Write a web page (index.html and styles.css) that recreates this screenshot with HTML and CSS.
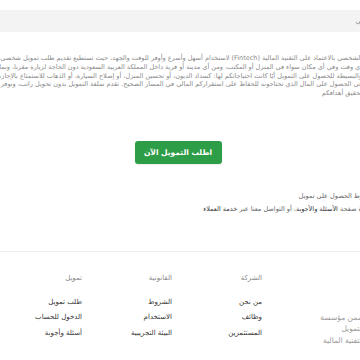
FILE: index.html
```html
<!DOCTYPE html>
<html lang="ar" dir="rtl">
<head>
    <meta charset="UTF-8" />
    <meta name="viewport" content="width=device-width, initial-scale=1.0" />
    <title>التمويل الشخصي</title>
    <link rel="stylesheet" href="styles.css">
</head>
<body>
    <div class="page">
        <div class="faq-bar">التمويل الشخصي</div>

        <p class="intro">
            الشخصي بالاعتماد على التقنية المالية (Fintech) لاستخدام أسهل وأسرع وأوفر للوقت والجهد، حيث تستطيع تقديم طلب تمويل شخصي والحصول عليه في<br>
            أي وقت وفي أي مكان سواء في المنزل أو المكتب، ومن أي مدينة أو قرية داخل المملكة العربية السعودية دون الحاجة لزيارة مقرنا، وبما يتوافق مع أحكام الشريعة<br>
            والبسيطة للحصول على التمويل أيًا كانت احتياجاتكم لها: كسداد الديون، أو تحسين المنزل، أو إصلاح السيارة، أو الذهاب للاستمتاع بالإجازة، أو غيرها<br>
            في الحصول على المال الذي تحتاجونه للحفاظ على استقراركم المالي في المسار الصحيح. تقدم سلفة التمويل بدون تحويل راتب، ونوفر لكم حلولاً تساعدكم<br>
            تحقيق أهدافكم
        </p>

        <div class="cta">
            <a href="#" class="cta-btn">اطلب التمويل الآن</a>
        </div>

        <div class="help">
            <p>شروط الحصول على تمويل</p>
            <p>زيارة صفحة <a href="#">الأسئلة والأجوبة</a>، أو التواصل معنا عبر <a href="#">خدمة العملاء</a></p>
        </div>
    </div>

    <footer class="footer">
        <div class="footer-grid">
            <div class="about">ضمن مؤسسة<br>التمويل<br>التقنية المالية</div>
            <div class="col">
                <h4>الشركة</h4>
                <a href="#">من نحن</a>
                <a href="#">وظائف</a>
                <a href="#">المستثمرين</a>
            </div>
            <div class="col">
                <h4>القانونية</h4>
                <a href="#">الشروط</a>
                <a href="#">الاستخدام</a>
                <a href="#">البيئة التجريبية</a>
            </div>
            <div class="col">
                <h4>تمويل</h4>
                <a href="#">طلب تمويل</a>
                <a href="#">الدخول للحساب</a>
                <a href="#">أسئلة وأجوبة</a>
            </div>
        </div>
    </footer>
</body>
</html>
```

FILE: styles.css
```css
html, body {
    margin: 0;
    overflow: hidden;
    background: #fff;
}
body {
    font-family: "DejaVu Sans", "Noto Sans", sans-serif;
    color: #333;
    width: 360px;
}
.page {
    width: 388px;
    margin-right: -12px;
}
.faq-bar {
    margin: 10px -36px 0 0;
    height: 22px;
    line-height: 22px;
    padding-right: 6px;
    background: #f3f3f3;
    color: #888;
    font-size: 6.5px;
}
.intro {
    margin: 22px 10px 0 0;
    font-size: 6.5px;
    line-height: 8.75px;
    color: #8a8a8a;
    white-space: nowrap;
}
.cta {
    margin-top: 42px;
    text-align: center;
}
.cta-btn {
    display: inline-block;
    width: 87px;
    height: 23px;
    line-height: 23px;
    background: #2e9d47;
    color: #fff;
    border-radius: 3px;
    font-size: 7.5px;
    font-weight: bold;
    text-decoration: none;
    box-shadow: 0 1px 2px rgba(0, 0, 0, 0.08);
}
.help {
    margin-top: 26px;
    font-size: 6.5px;
    line-height: 13px;
    color: #666;
}
.help p {
    margin: 0;
    white-space: nowrap;
}
.help a {
    color: #333;
    text-decoration: none;
}
.footer {
    margin-top: 35px;
    border-top: 1px solid #eee;
    padding: 21px 0 20px;
}
.footer-grid {
    display: grid;
    grid-template-columns: 110px 90px 90px 90px;
    margin-right: -12px;
}
.about {
    padding: 39px 8px 0 0;
    font-size: 7.5px;
    line-height: 11.5px;
    color: #999;
}
.col h4 {
    margin: 0 0 12px;
    font-size: 7px;
    line-height: 10px;
    font-weight: normal;
    color: #888;
}
.col a {
    display: block;
    font-size: 7px;
    line-height: 15.5px;
    color: #333;
    text-decoration: none;
}
```
